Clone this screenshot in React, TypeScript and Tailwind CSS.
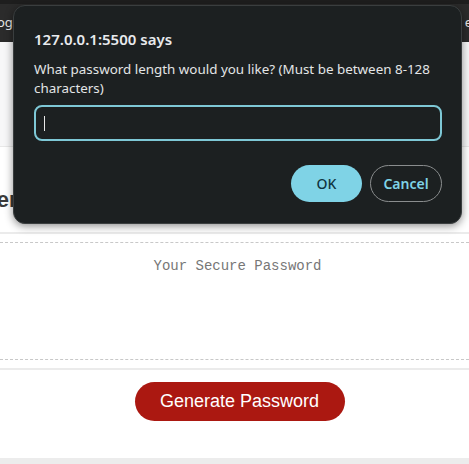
export default function App() {
  return (
    <div className="relative w-[469px] h-[464px] overflow-hidden bg-[#ececec] font-['Liberation_Sans',Arial,sans-serif]">
      {/* browser bookmarks bar */}
      <div className="h-[42px] bg-[#2b2b2b] border-t-[4px] border-[#1e1e1e] flex items-center justify-between text-[13px] text-[#e8e8e8] font-['Noto_Sans',sans-serif]">
        <span className="-ml-[3px]">ogl</span>
        <span className="-mr-[3px]">e</span>
      </div>

      {/* page */}
      <div className="bg-[#f7f7f8] pt-[104px]">
        <div className="bg-white border-t border-[#e8e8e8]">
          <div className="h-[87px] border-b-2 border-[#ebebeb] flex items-end pb-[16px]">
            <h2 className="-ml-[46px] whitespace-nowrap text-[22px] font-bold text-[#3a3a3a]">
              Generate a Password
            </h2>
          </div>
          <div className="pt-[8px] pb-[8px]">
            <div className="h-[118px] border-y border-dashed border-[#c8c8c8] pt-[13px] pl-[6px] text-center font-['Liberation_Mono',monospace] text-[14px] text-[#777]">
              Your Secure Password
            </div>
          </div>
          <div className="border-t-2 border-[#ebebeb] h-[90px] flex justify-center pt-[12px] pl-[10px]">
            <button className="w-[210px] h-[39px] rounded-full bg-[#ab1811] text-white text-[18px]">
              Generate Password
            </button>
          </div>
        </div>
      </div>

      {/* prompt dialog */}
      <div className="absolute left-[13px] top-[5px] w-[449px] h-[219px] rounded-[12px] bg-[#1c2021] border border-[#3a3e3f] shadow-[0_2px_8px_rgba(0,0,0,0.45)] pl-[20px] pr-[19px] pt-[23px] font-['Noto_Sans',sans-serif]">
        <div className="text-[15px] font-semibold text-[#e8eaed] leading-[20px]">
          127.0.0.1:5500 says
        </div>
        <p className="mt-[11px] text-[13.4px] leading-[19px] text-[#e3e5e6]">
          What password length would you like? (Must be between <span className="whitespace-nowrap">8-128</span> characters)
        </p>
        <div className="mt-[7px] h-[36px] rounded-[8px] border-2 border-[#7ec8d6] flex items-center pl-[8px]">
          <span className="w-px h-[15px] bg-[#e8e8e8]" />
        </div>
        <div className="mt-[24px] flex justify-end gap-[8px]">
          <button className="w-[71px] h-[37px] rounded-full bg-[#7fd3e6] text-[#0f3541] text-[14px] font-medium">
            OK
          </button>
          <button className="w-[72px] h-[37px] rounded-full border border-[#8a8d8e] text-[#7fd3e6] text-[14px] font-semibold">
            Cancel
          </button>
        </div>
      </div>
    </div>
  );
}
